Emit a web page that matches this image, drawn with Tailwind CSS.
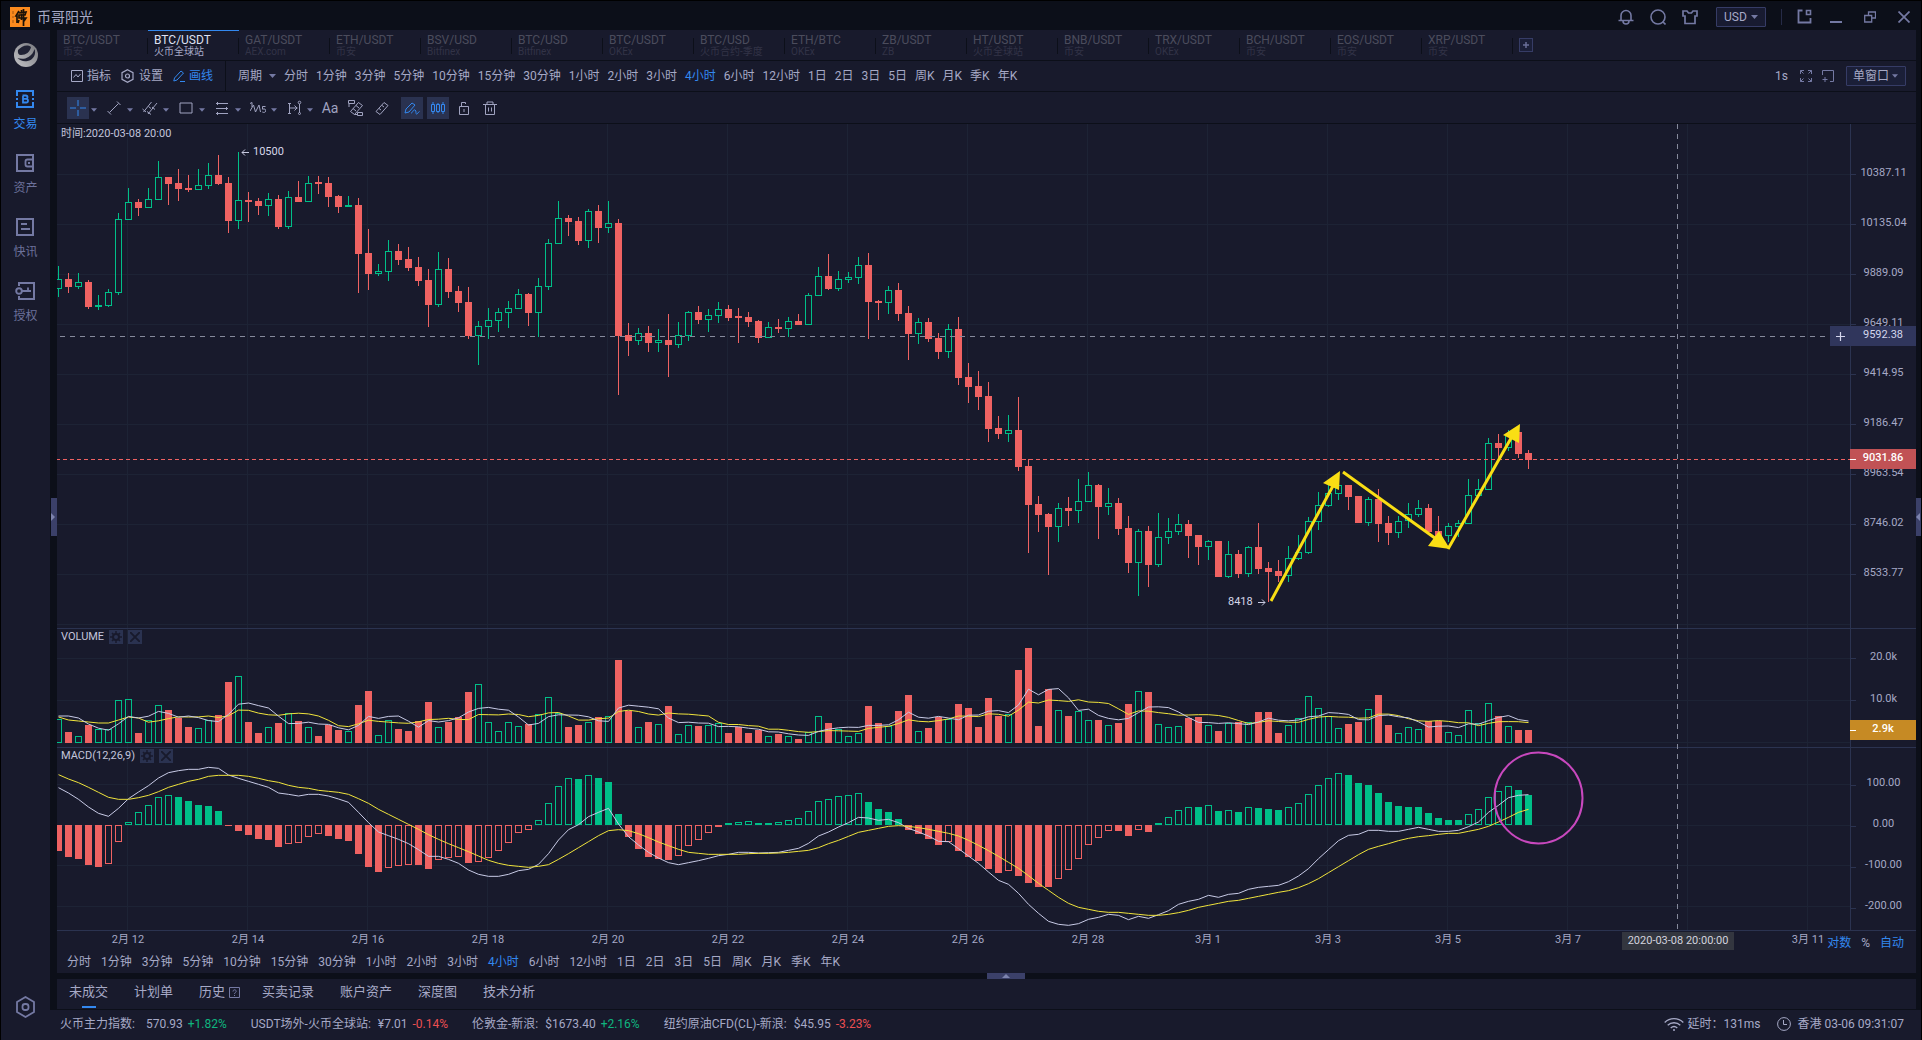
<!DOCTYPE html>
<html lang="zh-CN">
<head>
<meta charset="utf-8">
<meta name="viewport" content="width=device-width, initial-scale=1">
<title>BTC/USDT 4小时</title>
<script src="https://cdn.jsdelivr.net/npm/@tailwindcss/browser@4"></script>
</head>
<body class="bg-[#0c0f19] font-['Roboto','Noto_Sans_CJK_SC',sans-serif] text-xs text-[#a6a9c6]">
<div class="flex min-h-screen flex-col border border-b-0 border-black">

  <!-- Title bar -->
  <header class="flex h-[29px] shrink-0 items-center pt-0.5 pr-[11px] pl-[9px]">
    <svg class="size-5 shrink-0" viewBox="0 0 20 20"><rect width="20" height="20" fill="#fb8a1e"/><path d="M3 4v3M3 9v2M3 13v3" stroke="#a4560f" stroke-width="1"/><path d="M9 4 6 9l1 0v7M9 6l7-1-1 3H9v3h7l-2 3M11.500 3v10M13.500 2v17M9 13l-1 3" fill="none" stroke="#1b1208" stroke-width="1.700"/></svg>
    <h1 class="ml-[7px] text-sm leading-5">币哥阳光</h1>
    <div class="ml-auto flex items-center text-[#7479a3]">
      <button aria-label="通知"><svg class="size-4" viewBox="0 0 16 16" fill="none" stroke="currentColor" stroke-width="1.600"><path d="M3 11V6.500a5 5 0 0 1 10 0V11M.5 11.500h15M5 12a3 3 0 0 0 6 0"/></svg></button>
      <button class="ml-4" aria-label="搜索"><svg class="size-4" viewBox="0 0 16 16" fill="none" stroke="currentColor" stroke-width="1.600"><circle cx="8" cy="8" r="7"/><path d="m12.500 12.500 3 3"/></svg></button>
      <button class="ml-4" aria-label="皮肤"><svg class="size-4" viewBox="0 0 16 16" fill="none" stroke="currentColor" stroke-width="1.700"><path d="M1 2h4l1.500 2h3L11 2h4v5h-2v7.500H3V7H1z"/></svg></button>
      <div class="relative ml-[18px] h-5">
        <select aria-label="货币" class="h-5 w-[50px] appearance-none rounded-[1px] border border-[#363c66] bg-[#181b31] pl-[7px] text-xs leading-4 text-[#a6a9c6]"><option>USD</option></select>
        <svg class="pointer-events-none absolute top-2 right-2 h-1 w-[7px]" viewBox="0 0 7 4"><path d="M0 0h7L3.500 4z" fill="#7479a3"/></svg>
      </div>
      <span class="mx-[15px] h-4 w-px bg-[#262b47]"></span>
      <button aria-label="小窗"><svg class="size-[15px]" viewBox="0 0 15 15" fill="none" stroke="currentColor" stroke-width="1.800"><path d="M5.500 1.500h-4v12h12V9"/><path d="M9.500 1.500h4v4h-4z" stroke-width="1.600"/></svg></button>
      <button class="ml-[18px]" aria-label="最小化"><svg class="size-3" viewBox="0 0 12 12"><path d="M0 10h12v2H0z" fill="currentColor"/></svg></button>
      <button class="ml-[22px]" aria-label="还原"><svg class="size-3" viewBox="0 0 12 12" fill="none" stroke="currentColor" stroke-width="1.300"><path d="M4.500 4V1h7v6H8M.7 4.500h7v6.500h-7z"/></svg></button>
      <button class="ml-[22px]" aria-label="关闭"><svg class="size-3" viewBox="0 0 12 12" fill="none" stroke="currentColor" stroke-width="1.700"><path d="m.5.5 11 11M11.500.5l-11 11"/></svg></button>
    </div>
  </header>

  <div class="flex grow">
    <!-- Sidebar -->
    <nav class="flex w-[49px] shrink-0 flex-col items-center bg-[#181a2c] pt-[13px] text-[#6c719b]">
      <svg class="size-6" viewBox="0 0 24 24"><defs><linearGradient id="globe" x1="0" y1="1" x2="1" y2="0"><stop offset="0" stop-color="#c4c4c7"/><stop offset="1" stop-color="#77787e"/></linearGradient></defs><circle cx="12" cy="12" r="12" fill="url(#globe)"/><path d="M4 7c4-4 9-6 13-3-1 5-5 8-10 8-2.500 0-3.500-2-3-5M20.500 6c2 5-1 11-7 12-4 1-8-1-10-3 3 1 7 1.500 11-1 3.500-2 5-5 6-8z" fill="#202234"/></svg>
      <a href="#" class="mt-[23px] flex flex-col items-center gap-2 leading-4 text-[#3388ef]"><svg class="size-[18px]" viewBox="0 0 18 18" fill="none" stroke="currentColor" stroke-width="2"><path d="M1 6V1h16v5M1 12v5h16v-5"/><path d="M0 9h2M16 9h2M6.500 5.500h3.300a1.600 1.600 0 0 1 0 3.400H7v-3 6.600h3.200a1.800 1.800 0 0 0 0-3.600" stroke-width="1.800"/></svg>交易</a>
      <a href="#" class="mt-[22px] flex flex-col items-center gap-2 leading-4"><svg class="size-[18px]" viewBox="0 0 18 18" fill="none" stroke="#7479a3" stroke-width="2"><path d="M1 1h16v16H1z"/><path d="M17 5.500h-5.500a2 2 0 0 0-2 2v3a2 2 0 0 0 2 2H17M12 9h2" stroke-width="1.800"/></svg>资产</a>
      <a href="#" class="mt-[22px] flex flex-col items-center gap-2 leading-4"><svg class="size-[18px]" viewBox="0 0 18 18" fill="none" stroke="#7479a3" stroke-width="2"><path d="M1 1h16v16H1z"/><path d="M5 6h6M5 11h9" stroke-width="1.800"/></svg>快讯</a>
      <a href="#" class="mt-[22px] flex flex-col items-center gap-2 leading-4"><svg class="h-[18px] w-5" viewBox="0 0 20 18" fill="none" stroke="#7479a3" stroke-width="2"><path d="M4 4V1h15v16H4v-3"/><circle cx="4" cy="9" r="2.800" stroke-width="1.900"/><path d="M7 9h9M13 9V5.500" stroke-width="1.800"/></svg>授权</a>
      <button class="mt-auto mb-[22px]" aria-label="设置"><svg class="h-[22px] w-[19px]" viewBox="0 0 19 22" fill="none" stroke="#7479a3" stroke-width="1.800"><path d="m9.500 1 8.500 5v10l-8.500 5L1 16V6z"/><rect x="6.500" y="8" width="6" height="6" rx="2.500"/></svg></button>
    </nav>

    <div class="flex min-w-0 grow flex-col">
      <div class="relative flex grow flex-col pr-[5px] pl-[7px]">
        <div class="absolute top-[468px] left-px flex h-[38px] w-1.5 items-center bg-[#3b4069]"><svg class="h-2 w-1" viewBox="0 0 4 8"><path d="m0 0 4 4-4 4z" fill="#7d83ae"/></svg></div>
        <div class="absolute top-[468px] right-0 flex h-[38px] w-[5px] items-center bg-[#3b4069]"><svg class="h-2 w-1" viewBox="0 0 4 8"><path d="M4 0 0 4l4 4z" fill="#7d83ae"/></svg></div>

        <!-- Market tabs -->
        <div id="tabs" class="flex h-[31px] shrink-0 items-stretch border-b border-[#0c0f19] bg-[#181a2c]"></div>

        <!-- Interval toolbar -->
        <div class="flex h-[31px] shrink-0 items-stretch border-b border-[#0c0f19] bg-[#181a2c]">
          <div class="flex w-[169px] items-center border-r border-[#0c0f19] pl-[14px]">
            <button class="flex w-[50px] items-center gap-1"><svg class="size-3" viewBox="0 0 12 12" fill="none" stroke="currentColor"><path d="M.5.5h11v11H.5zM2.500 7.500 5 4.500l2 2.500 2.500-3"/></svg>指标</button>
            <button class="flex w-[52px] items-center gap-[5px]"><svg class="h-[14px] w-[13px]" viewBox="0 0 13 14" fill="none" stroke="currentColor" stroke-width="1.200"><path d="m6.500.7 5.500 3v6.600l-5.500 3-5.500-3V3.700z"/><circle cx="6.500" cy="7" r="2"/></svg>设置</button>
            <button class="flex items-center gap-1 text-[#3388ef]"><svg class="size-3" viewBox="0 0 12 12" fill="none" stroke="currentColor"><path d="M.8 11 1.500 8 8 1l2.500 2L4 10zM7 11.500h5"/></svg>画线</button>
          </div>
          <div class="flex items-center gap-2 pl-3">
            <button class="flex items-center gap-[7px]">周期<svg class="h-1 w-[7px]" viewBox="0 0 7 4"><path d="M0 0h7L3.500 4z" fill="#7479a3"/></svg></button>
            <div class="intervals flex items-center gap-2"></div>
          </div>
          <div class="ml-auto flex items-center pr-[10px]">
            <span>1s</span>
            <button class="ml-3" aria-label="全屏"><svg class="size-3" viewBox="0 0 12 12" fill="none" stroke="#7479a3"><path d="M.5 4V.5H4M.5.5l3 3M8 .5h3.500V4M11.500.5l-3 3M.5 8v3.500H4M.5 11.500l3-3M8 11.500h3.500V8M11.500 11.500l-3-3"/></svg></button>
            <button class="ml-[10px]" aria-label="新建窗口"><svg class="size-3" viewBox="0 0 12 12" fill="none" stroke="#7479a3"><path d="M.5 5V.5h11v11H8M3 7v5M.5 9.500h5"/></svg></button>
            <div class="relative ml-3 h-5">
              <select aria-label="窗口布局" class="h-5 w-[60px] appearance-none rounded-[1px] border border-[#363c66] bg-[#1b1f38] pl-[6px] text-xs leading-4 text-[#a6a9c6]"><option>单窗口</option></select>
              <svg class="pointer-events-none absolute top-2 right-2 h-1 w-1.5" viewBox="0 0 7 4"><path d="M0 0h7L3.500 4z" fill="#7479a3"/></svg>
            </div>
          </div>
        </div>

        <!-- Drawing tools -->
        <div id="tools" class="flex h-8 shrink-0 items-center gap-1 border-b border-[#0c0f19] bg-[#181a2c] pl-[10px]"></div>

        <!-- Chart -->
        <section class="bg-[#181a2c]">
          <div class="flex">
            <div class="relative min-w-0 grow">
              <svg id="plot" class="block h-[806px] w-full"></svg>
              <p class="absolute top-0.5 left-1 text-[11px] leading-4 text-[#c3c5dc]">时间:2020-03-08 20:00</p>
              <div class="absolute top-[505px] left-1 flex items-center text-[11px] leading-4 text-[#c3c5dc]">VOLUME<span class="studyButtons ml-[5px] flex gap-[5px]"></span></div>
              <div class="absolute top-[624px] left-1 flex items-center text-[11px] leading-4 text-[#c3c5dc]">MACD(12,26,9)<span class="studyButtons ml-[5px] flex gap-[5px]"></span></div>
              <div class="absolute top-[202px] right-0 flex h-5 w-5 items-center justify-center bg-[#30365c]"><svg class="size-[9px]" viewBox="0 0 9 9"><path d="M4.500 0v9M0 4.500h9" stroke="#d3d6ec" stroke-width="1.200"/></svg></div>
            </div>
            <div class="relative w-[66px] shrink-0 border-l border-[#2b3350] text-[11px] text-[#a6a9c6]">
              <div id="priceAxis" class="h-[504px] pt-[25px]"></div>
              <div id="volumeAxis" class="h-[119px] border-t border-[#2b3350] pt-[8px]"></div>
              <div id="macdAxis" class="h-[183px] border-t border-[#2b3350] pt-4"></div>
              <div class="absolute top-[202px] -left-px flex h-5 w-[66px] items-center justify-center bg-[#30365c] pb-0.5 text-[#d3d6ec]">9592.38</div>
              <div class="absolute top-[325px] -left-px flex h-5 w-[66px] items-center justify-center bg-[#c15255] pb-0.5 font-medium text-white"><span class="absolute top-[10px] left-0 h-px w-1.5 bg-white"></span>9031.86</div>
              <div class="absolute top-[596px] -left-px flex h-5 w-[66px] items-center justify-center bg-[#c68a24] pb-0.5 font-medium text-white"><span class="absolute top-[10px] left-0 h-px w-1.5 bg-white"></span>2.9k</div>
            </div>
          </div>
          <div class="relative flex h-5 items-center border-t border-[#2b3350] pr-3">
            <div id="dates" class="flex w-0 grow pl-[11px] text-[11px] text-[#a6a9c6]"></div>
            <div class="flex gap-[10px] pt-1"><button class="text-[#3388ef]">对数</button><button>%</button><button class="text-[#3388ef]">自动</button></div>
            <div class="absolute top-px left-[1565px] flex h-[18px] w-[112px] items-center justify-center bg-[#33363f] text-[11px] text-[#d2d3de]">2020-03-08 20:00:00</div>
          </div>
          <div class="intervals flex h-[23px] items-center gap-[10px] pl-[10px]"></div>
        </section>

        <button class="ml-[50%] flex h-1.5 w-[38px] items-center justify-center bg-[#3b4069]" aria-label="展开"><svg class="h-1 w-2" viewBox="0 0 8 4"><path d="M4 0 8 4H0z" fill="#7d83ae"/></svg></button>

        <!-- Orders -->
        <div id="panels" class="flex h-[30px] shrink-0 items-stretch gap-[26px] bg-[#181a2c] pl-3 text-[13px]"></div>
      </div>

      <!-- Status bar -->
      <footer class="mt-px flex h-[30px] shrink-0 items-center gap-6 bg-[#181a2c] pr-[17px] pl-[10px] pb-0.5">
        <p class="flex gap-[5px]"><span class="mr-[6px]">火币主力指数:</span><span>570.93</span><span class="text-[#0fb57f]">+1.82%</span></p>
        <p class="flex gap-[5px]"><span class="mr-0.5">USDT场外-火币全球站:</span><span>¥7.01</span><span class="text-[#ec4f52]">-0.14%</span></p>
        <p class="flex gap-[5px]"><span class="mr-0.5">伦敦金-新浪:</span><span>$1673.40</span><span class="text-[#0fb57f]">+2.16%</span></p>
        <p class="flex gap-[5px]"><span class="mr-0.5">纽约原油CFD(CL)-新浪:</span><span>$45.95</span><span class="text-[#ec4f52]">-3.23%</span></p>
        <div class="ml-auto flex items-center gap-[17px]">
          <p class="flex items-center gap-1"><svg class="h-[15px] w-5" viewBox="0 0 20 15" fill="none" stroke="currentColor" stroke-width="1.300"><path d="M.7 5.500a13 13 0 0 1 18.600 0M3.700 8.300a9 9 0 0 1 12.600 0M6.700 11a5 5 0 0 1 6.600 0"/><circle cx="10" cy="13" r="1" fill="currentColor" stroke="none"/></svg>延时：131ms</p>
          <p class="flex items-center gap-[6px]"><svg class="size-[14px]" viewBox="0 0 14 14" fill="none" stroke="currentColor"><circle cx="7" cy="7" r="6.400"/><path d="M6.500 3v4.500H10"/></svg>香港 03-06 09:31:07</p>
        </div>
      </footer>
    </div>
  </div>
</div>

<script>
const fill = (sel, html) => document.querySelectorAll(sel).forEach(el => { el.innerHTML = html; });

/* Market tabs */
const markets = [['BTC/USDT','币安'],['BTC/USDT','火币全球站'],['GAT/USDT','AEX.com'],['ETH/USDT','币安'],['BSV/USD','Bitfinex'],['BTC/USD','Bitfinex'],['BTC/USDT','OKEx'],['BTC/USD','火币合约-季度'],['ETH/BTC','OKEx'],['ZB/USDT','ZB'],['HT/USDT','火币全球站'],['BNB/USDT','币安'],['TRX/USDT','OKEx'],['BCH/USDT','币安'],['EOS/USDT','币安'],['XRP/USDT','币安']];
fill('#tabs', markets.map(([pair, venue], i) => {
  const on = i === 1;
  return `<button class="relative w-[91px] border-t pb-px pl-1.5 text-left ${on ? 'border-[#3388ef]' : 'border-transparent'}">
    <span class="block text-xs leading-3 ${on ? 'text-[#dfe1f2]' : 'text-[#4b4c5c]'}">${pair}</span>
    <span class="block text-[10px] leading-[11px] ${on ? 'text-[#a6a9c6]' : 'text-[#323347]'}">${venue}</span>
    <span class="absolute top-[7px] right-0 h-4 w-px bg-[#0c0f19]"></span></button>`;
}).join('') + `<button class="mt-2 ml-1.5 flex size-[14px] items-center justify-center border border-[#363c66] bg-[#1b1f38]" aria-label="添加"><svg class="size-1.5" viewBox="0 0 6 6"><path d="M3 0v6M0 3h6" stroke="#6a6f98" stroke-width="1.500"/></svg></button>`);

/* Intervals */
fill('.intervals', ['分时','1分钟','3分钟','5分钟','10分钟','15分钟','30分钟','1小时','2小时','3小时','4小时','6小时','12小时','1日','2日','3日','5日','周K','月K','季K','年K']
  .map(t => `<button class="whitespace-nowrap ${t === '4小时' ? 'text-[#3388ef]' : ''}">${t}</button>`).join(''));

/* Drawing tools: [label, glyph, has menu, active] */
const tools = [
  ['十字光标','<path d="M8 0v6M8 10v6M0 8h6M10 8h6"/>',1,1],
  ['线段','<path d="m3.500 12.500 9-9M1.500 11l3.500 3.500M11 1.500l3.500 3.500"/>',1],
  ['通道','<path d="m1.500 12 8-10M6 14l9-11M.5 9l3.500 3M5 11.500l4 3M6.500 6.500l2.500 2M10 7l3 2.500"/>',1],
  ['矩形','<path d="M2 3h12v10H2z"/>',1],
  ['斐波那契','<path d="M2 3.500h12M2 8.500h12M2 13.500h12M3.500 2v3M12.500 7v3M3.500 12v3"/>',1],
  ['波浪','<path d="m0 3.500 2-1V7M0 11l3.500-6 2 7L9 5l1.500 7"/><path d="M15.500 6.500h-3v2.700c2.500-.8 3.600.4 3.200 2-.4 1.400-2.200 1.500-3.400.8"/>',1],
  ['测距','<path d="M3.500 3v10M3.500 8h8M8.500 5.500 11 8l-2.500 2.500M13.500 4v9M2 13.500h3M2 3.500h3"/><circle cx="13.500" cy="2.500" r="1.300"/><circle cx="13.500" cy="13.500" r="1"/>',1],
  ['文字','Aa'],
  ['磁吸','<path d="m2.500 11.500 8-9 4 3-8 9zM5 8.500l3 2.500M8 5.500l3 2.500"/><path d="M.5.5h6v3h-6zM9.500 12.500h5v3h-5zM1 4v3M6.500 14.500h3"/>'],
  ['尺子','<path d="m2 11.500 8-9 4 3-8 9zM5 8.500l2 1.500M8 5.500l2 1.500"/>'],
  ['连续画线','<path d="m1 13 1-4 6-6 3 2-6 7zM7 13c2 0 2-4 4-3s0 4 1.500 4S14 12 15.500 11.500"/>',0,1],
  ['K线','<path d="M1.500 4.500h3v7h-3zM6.500 4.500h3v7h-3zM11.500 4.500h3v7h-3zM3 2v2M8 3v1M13 2v2M3 12v2M8 12v1M13 12v2"/>',0,1],
  ['解锁','<path d="M3.500 6.500h9v8h-9zM5.500 6V2.500h4V4M8 9v3"/>'],
  ['删除','<path d="M1 4.500h14M3.500 4.500v10h9v-10M5 4V2h6v2M6.500 7.500v4M9.500 7.500v4"/>'],
];
fill('#tools', tools.map(([label, glyph, menu, on], i) => `<div class="flex h-[22px] items-center ${i === 10 ? 'ml-1' : ''}">
  <button class="flex size-[22px] items-center justify-center ${on ? 'bg-[#2a3250] text-[#3388ef]' : 'text-[#a0a3c0]'}" aria-label="${label}">${glyph === 'Aa' ? '<span class="text-sm">Aa</span>' : `<svg class="size-4" viewBox="0 0 16 16" fill="none" stroke="currentColor">${glyph}</svg>`}</button>
  ${menu ? `<button class="flex w-[10px] justify-center pt-1" aria-label="${label}菜单"><svg class="h-1 w-1.5" viewBox="0 0 7 4"><path d="M0 0h7L3.500 4z" fill="#7479a3"/></svg></button>` : ''}</div>`).join(''));

fill('.studyButtons', `<button class="flex size-[14px] items-center justify-center bg-[#2a3250]" aria-label="设置"><svg class="size-3" viewBox="0 0 12 12" fill="none" stroke="#181a2c"><circle cx="6" cy="6" r="3" stroke-width="2"/><path d="M6 0v3M6 9v3M0 6h3M9 6h3M2 2l2 2M8 8l2 2M10 2 8 4M4 8l-2 2" stroke-width="1.500"/></svg></button><button class="flex size-[14px] items-center justify-center bg-[#2a3250]" aria-label="关闭"><svg class="size-[10px]" viewBox="0 0 9 9"><path d="m0 0 9 9M9 0 0 9" stroke="#181a2c" stroke-width="1.700"/></svg></button>`);

/* Axes */
const tick = '<span class="absolute top-1/2 left-0 h-px w-[5px] bg-[#2b3350]"></span>';
fill('#priceAxis', ['10387.11','10135.04','9889.09','9649.11','9414.95','9186.47','8963.54','8746.02','8533.77'].map(t => `<div class="relative flex h-[50px] items-center justify-center pb-0.5">${tick}${t}</div>`).join(''));
fill('#volumeAxis', ['20.0k','10.0k'].map(t => `<div class="relative flex h-[42px] items-center justify-center pb-0.5">${tick}${t}</div>`).join(''));
fill('#macdAxis', ['100.00','0.00','-100.00','-200.00'].map(t => `<div class="relative flex h-[41px] items-center justify-center pb-0.5">${tick}${t}</div>`).join(''));
fill('#dates', ['2月 12','2月 14','2月 16','2月 18','2月 20','2月 22','2月 24','2月 26','2月 28','3月 1','3月 3','3月 5','3月 7','','3月 11'].map(t => `<span class="w-[120px] shrink-0 text-center">${t}</span>`).join(''));

fill('#panels', ['未成交','计划单','历史','买卖记录','账户资产','深度图','技术分析'].map((t, i) => `<button class="relative flex items-center pb-1 ${i === 2 ? '-mr-1' : ''}">${t}${i === 2 ? '<svg class="ml-1 size-[11px]" viewBox="0 0 11 11" fill="none" stroke="#7479a3"><path d="M.5.5h10v10H.5zM4 4.500c0-2.500 3.500-2 3.200 0C7 5.500 5.500 5.500 5.500 7M5.500 8v1"/></svg>' : ''}${i === 0 ? '<span class="absolute bottom-px left-[13px] h-0.5 w-[14px] bg-[#3388ef]"></span>' : ''}</button>`).join(''));

/* Candles: side, high, body top, body bottom, low, volume top */
const candles = `g266,279,289,297,719 r273,279,287,293,732 g273,282,287,289,736 r280,282,307,309,725 g295,305,307,310,729 g289,292,306,307,729
g213,219,293,295,700 g188,202,220,220,699 r199,202,208,216,733 g188,199,208,208,720 g161,177,200,200,705 r177,177,184,205,710
r169,183,189,201,718 r175,188,190,192,727 g169,185,190,190,728 g163,175,186,189,720 r155,175,184,185,715 r177,183,221,233,682
g152,200,221,229,676 r192,200,202,222,722 r198,201,206,215,733 g193,199,206,216,727 r195,199,227,229,723 g191,197,227,229,713
r181,197,202,202,721 g176,183,202,202,727 r176,182,184,194,736 r177,183,197,207,725 r195,196,207,213,730 g196,205,207,207,731
r198,205,254,293,705 r229,253,274,290,691 g264,271,274,276,735 g240,251,272,281,720 r244,251,260,265,729 r247,259,268,271,731
r257,267,281,286,721 r269,280,305,327,702 g252,269,305,307,727 r258,269,292,298,722 r286,291,303,312,717 r287,302,336,339,692
g321,326,336,365,684 g308,320,327,339,722 g308,312,321,332,731 g301,308,313,328,722 g289,294,309,309,726 r293,294,313,326,724
g278,286,313,337,714 g239,243,287,290,697 g201,218,244,244,713 r215,218,222,236,727 r217,221,241,245,725 g209,211,241,248,722
r205,211,228,243,717 g201,223,228,233,716 r219,223,336,395,660 r323,335,341,356,711 g328,333,341,345,727 r326,333,343,352,722
g329,340,343,352,724 r314,340,345,377,706 g322,335,345,348,734 g311,312,336,341,725 r306,312,320,324,726 g309,315,320,332,725
g302,309,316,323,723 r305,309,318,321,733 r308,316,318,343,727 r312,317,322,327,733 r320,321,338,343,730 g322,327,338,338,736
r319,327,329,333,734 g317,321,329,337,736 r314,321,325,325,739 g293,295,325,325,732 g267,276,296,296,716 r254,276,289,290,723
g271,279,289,291,729 g272,277,280,283,736 g257,265,278,284,733 r253,265,302,339,706 r300,301,303,320,723 g286,290,303,314,726
r283,290,314,321,711 r306,313,334,360,695 g318,322,334,344,731 r318,322,339,342,728 r333,338,352,359,717 g324,329,352,358,719
r317,329,378,385,704 r363,377,387,403,708 r371,386,397,410,727 r382,396,429,442,698 r416,428,434,439,716 g415,430,434,442,714
r397,430,467,471,670 r459,466,505,553,648 r496,504,515,532,726 r513,514,527,575,689 g503,508,527,542,710 r497,508,511,526,716
g479,501,511,523,711 g472,485,502,502,720 r484,485,507,539,720 g488,503,507,515,725 r498,503,529,535,723 r516,528,563,573,704
g529,531,563,596,691 r526,531,565,587,692 g513,537,565,567,724 g518,531,538,544,727 g514,524,532,535,726 r520,524,536,558,718
r535,535,547,565,717 g540,541,547,560,725 r541,541,577,577,731 g541,554,577,578,723 r550,554,574,578,722 g546,547,574,577,722
r523,547,569,574,712 r562,568,572,602,712 r560,571,576,582,733 g546,558,576,582,725 g535,552,559,560,718 g517,521,553,554,696
g492,505,522,530,708 g483,493,506,507,716 g480,485,494,500,728 r485,485,497,510,724 r496,496,523,523,722 g497,499,523,526,709
r489,499,524,542,695 r516,523,533,545,725 g516,521,533,538,733 g503,514,521,528,727 g500,508,515,517,729 r504,508,532,532,721
r516,531,540,543,721 g523,526,536,542,732 g520,523,527,537,735 g479,495,524,524,710 g479,489,496,496,723 g438,443,490,490,703
r434,443,448,458,716 g430,435,448,451,726 r427,432,454,458,730 r450,453,460,469,730`
  .trim().split(/\s+/).map(s => { const [high, top, bottom, low, vol] = s.slice(1).split(',').map(Number); return { up: s[0] === 'g', high, top, bottom, low, vol }; });

const hist = [-26,-32,-34,-40,-42,-39,-17,3,13,20,28,30,28,24,20,19,14,-1,-6,-10,-14,-15,-22,-19,-18,-12,-9,-11,-14,-16,-29,-42,-47,-43,-41,-40,-40,-44,-35,-33,-32,-38,-37,-33,-26,-18,-8,-5,5,22,39,47,46,50,47,43,11,-12,-24,-32,-34,-35,-31,-21,-15,-8,-2,2,3,4,2,2,3,5,7,14,24,26,29,30,32,23,16,13,6,-5,-9,-14,-20,-17,-26,-32,-36,-44,-48,-46,-51,-58,-62,-62,-54,-45,-34,-20,-13,-6,-6,-11,-5,-7,2,8,15,18,18,20,14,15,13,18,17,16,15,18,22,31,40,47,52,50,42,40,32,23,19,18,18,12,7,5,5,11,16,28,34,39,35,30];

/* MACD lines, in thirds of a pixel below y = 620 */
const dif = [503,519,538,561,580,589,565,536,516,497,474,458,452,448,448,442,445,465,475,484,493,502,519,523,528,523,523,528,537,547,577,608,636,647,658,671,689,709,709,718,730,750,763,769,769,763,752,748,733,701,660,629,614,590,577,565,612,650,675,697,714,728,734,728,722,715,707,703,697,697,699,698,697,691,685,670,648,636,621,608,592,594,601,598,608,625,636,648,664,665,686,708,730,756,781,793,820,853,880,904,913,916,911,898,892,883,886,899,889,895,884,872,853,844,838,826,832,823,820,808,802,799,796,785,768,746,716,689,662,646,643,631,631,634,634,628,622,628,634,634,631,620,606,577,556,533,526,524];
const dea = [464,477,488,502,517,532,538,538,533,526,515,502,493,484,478,469,466,466,466,469,475,482,487,496,502,505,511,514,517,523,536,550,568,583,598,613,628,644,658,671,683,695,708,721,730,736,739,742,739,734,718,701,683,665,647,632,629,632,641,653,666,677,688,697,700,703,703,703,703,701,700,700,699,697,694,691,683,671,661,649,637,631,625,619,617,619,623,628,634,640,648,661,676,692,709,727,745,767,790,811,832,850,862,868,874,877,877,880,883,886,886,883,878,871,862,856,850,844,841,835,829,823,817,812,803,791,776,758,740,722,704,688,679,671,662,655,650,647,643,640,640,634,628,619,606,592,577,568];

const UP = '#00bf88', DOWN = '#ef6262', AXIS = '#2b3350', GRID = '#1d2335';
const cx = i => 58.5 + 10 * i;
const hline = (y, color, extra = '') => `<path d="M0 ${y + .5}H4000" stroke="${color}" ${extra}/>`;
const bar = (i, top, bottom, color, solid) => solid || bottom - top < 2
  ? `<rect x="${cx(i) - 3.5}" y="${top}" width="7" height="${Math.max(bottom - top, 1)}" fill="${color}"/>`
  : `<rect x="${cx(i) - 3}" y="${top + .5}" width="6" height="${bottom - top - 1}" fill="none" stroke="${color}"/>`;
const polyline = (ys, color) => `<polyline points="${ys.map((y, i) => `${cx(i)},${y}`).join(' ')}" fill="none" stroke="${color}"/>`;
const average = (n, seed) => candles.map((_, i) => i < seed.length ? seed[i] : candles.slice(i - n + 1, i + 1).reduce((s, c) => s + c.vol, 0) / n);

let out = '<g transform="translate(-57 -124)">';
for (let x = 127; x < 4000; x += 120) out += `<path d="M${x + .5} 124V930" stroke="${GRID}"/>`;
for (const y of [174,224,274,324,374,424,474,524,574,624,658,700,742,784,825,865,906]) out += hline(y, GRID);
out += hline(628, AXIS) + hline(747, AXIS);
candles.forEach((c, i) => {
  const color = c.up ? UP : DOWN;
  if (c.top > c.high) out += `<path d="M${cx(i)} ${c.high}V${c.top}" stroke="${color}"/>`;
  if (c.low > c.bottom) out += `<path d="M${cx(i)} ${c.bottom}V${c.low}" stroke="${color}"/>`;
  out += bar(i, c.top, c.bottom, color, !c.up) + bar(i, c.vol, 743, color, !c.up);
  const h = hist[i], grows = i > 0 && h > hist[i - 1];
  out += h > 0 ? bar(i, 825 - h, 825, UP, !grows || h < 3) : bar(i, 825, 825 - h, DOWN, !grows || h > -3);
});
out += polyline(average(10, [717,720,721,722,723,723,720,717,718]), '#f0e43c');
out += polyline(average(5, [716,716,718,724]), '#c8cbe6');
out += polyline(dif.map(v => 620 + v / 3), '#c8cbe6');
out += polyline(dea.map(v => 620 + v / 3), '#f0e43c');
out += hline(336, '#868a9c', 'stroke-dasharray="5 5"') + hline(459, DOWN, 'stroke-dasharray="4 3"');
out += '<path d="M1677.5 124V930" stroke="#868a9c" stroke-dasharray="5 5"/>';
out += `<g fill="none" stroke="#c8cae0"><path d="M249 152.500h-7M245 149.500l-3 3 3 3M1258 602.500h7M1262 599.500l3 3-3 3"/></g>
<g fill="#d5d7e8" class="text-[11px]"><text x="253" y="155">10500</text><text x="1228" y="605">8418</text></g>
<g stroke="#f9de14" stroke-width="3" fill="#f9de14"><path d="M1271 601 1334 484M1343 472l96 69M1448 549l66-116"/><g stroke="none"><path d="m1340 471-17 12 16 7zM1450 549l-11-18-11 15zM1520 424l-17 11 16 8z"/></g></g>
<ellipse cx="1538.500" cy="798" rx="44" ry="45.500" fill="none" stroke="#c848be" stroke-width="2"/></g>`;
document.getElementById('plot').innerHTML = out;
</script>
</body>
</html>
